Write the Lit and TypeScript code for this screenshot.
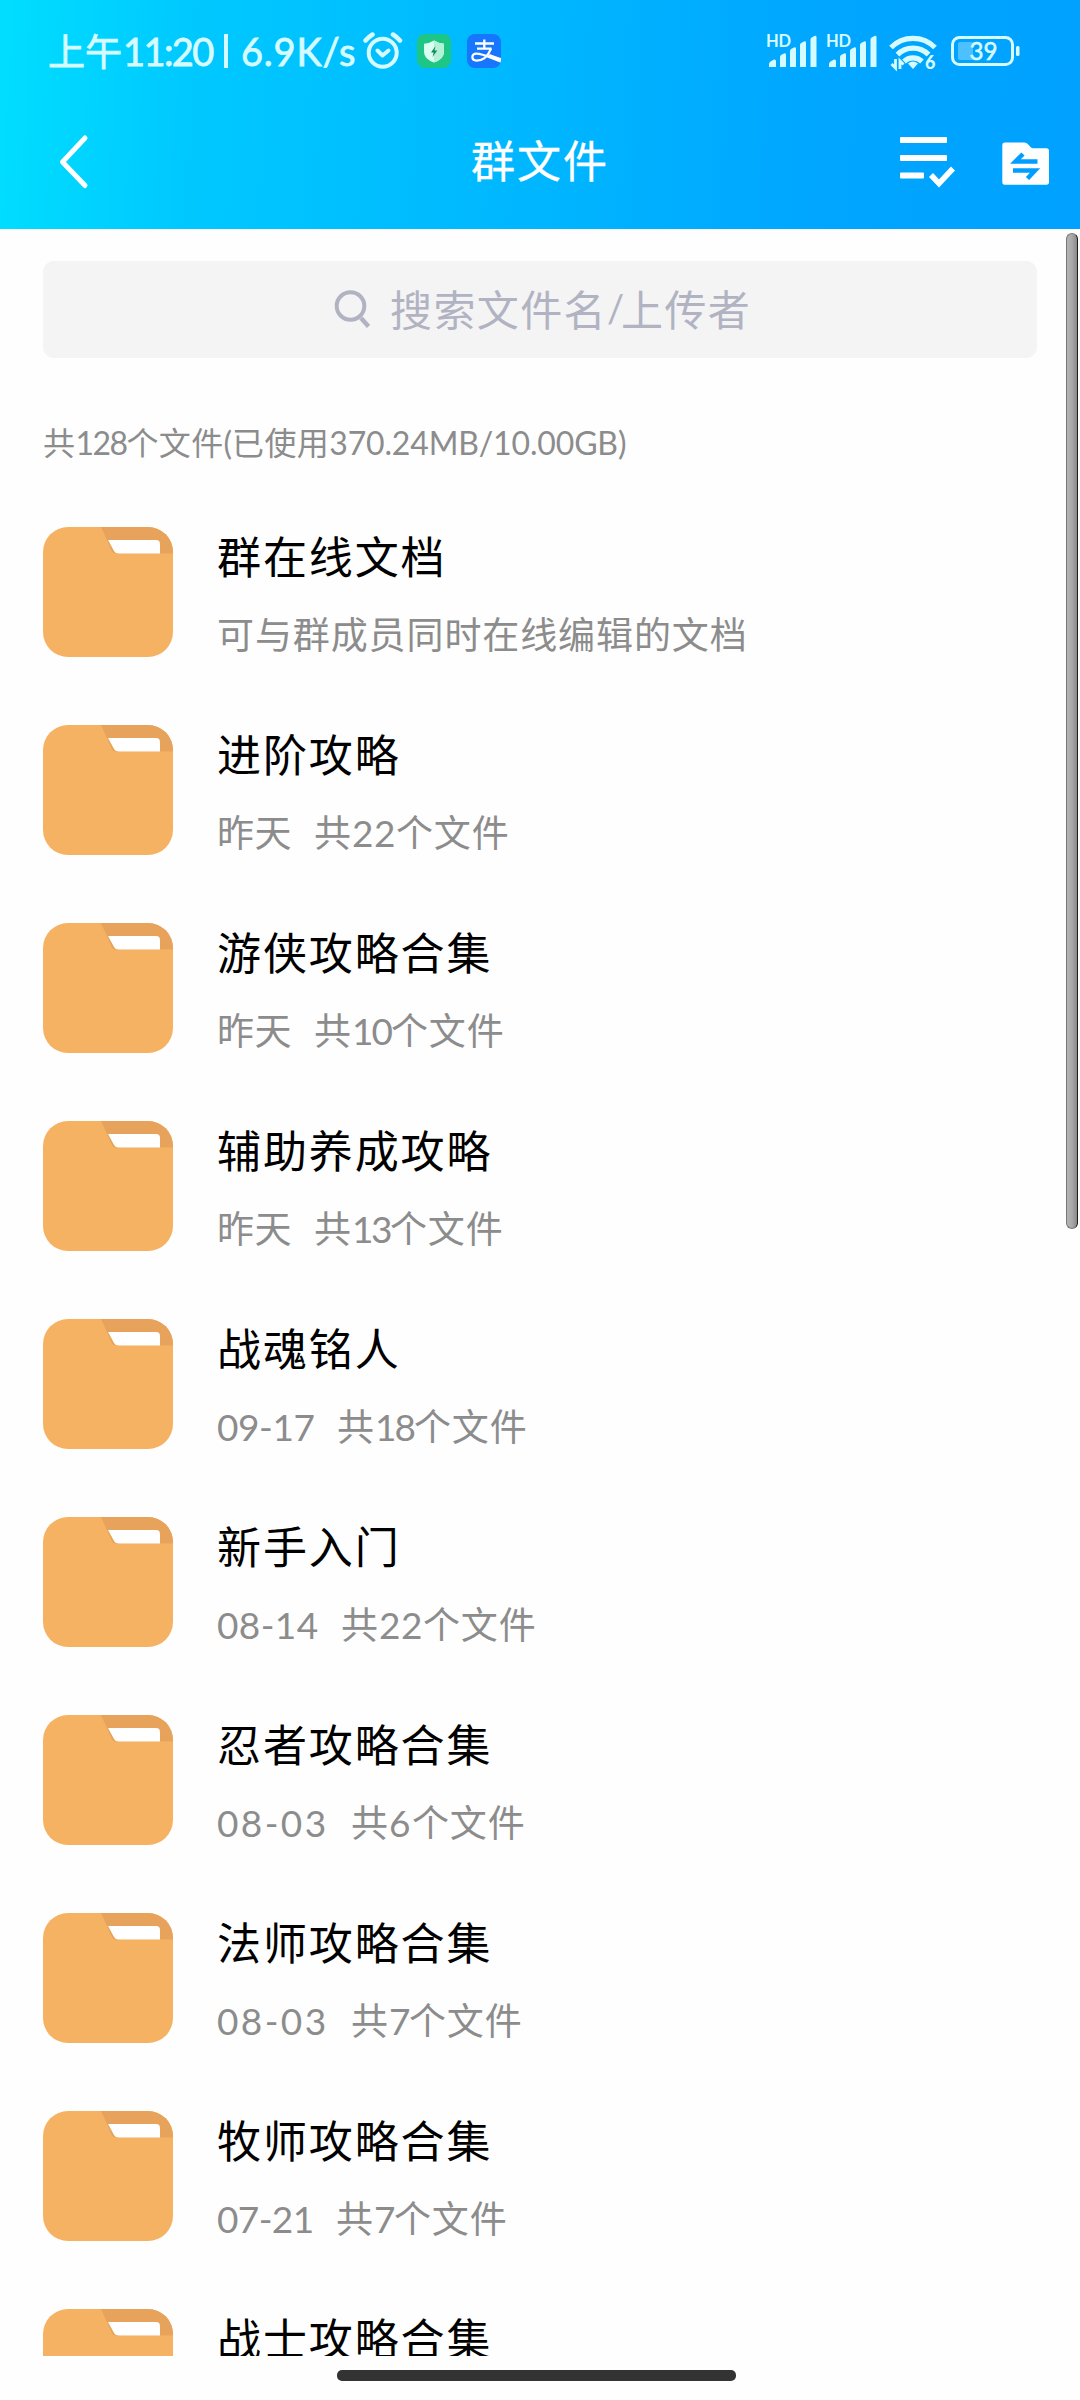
import { LitElement, html, css, svg, nothing } from "lit";
import { customElement, property } from "lit/decorators.js";
import { styleMap } from "lit/directives/style-map.js";

interface Entry {
  title: string;
  note?: string;
  date?: string;
  dateWidth?: number;
  count?: string;
  countWidth?: number;
}

const ENTRIES: Entry[] = [
  { title: "群在线文档", note: "可与群成员同时在线编辑的文档" },
  { title: "进阶攻略", date: "昨天", dateWidth: 97, count: "22", countWidth: 44 },
  { title: "游侠攻略合集", date: "昨天", dateWidth: 97, count: "10", countWidth: 39 },
  { title: "辅助养成攻略", date: "昨天", dateWidth: 97, count: "13", countWidth: 38 },
  { title: "战魂铭人", date: "09-17", dateWidth: 120, count: "18", countWidth: 39 },
  { title: "新手入门", date: "08-14", dateWidth: 124, count: "22", countWidth: 44 },
  { title: "忍者攻略合集", date: "08-03", dateWidth: 134, count: "6", countWidth: 23 },
  { title: "法师攻略合集", date: "08-03", dateWidth: 134, count: "7", countWidth: 20 },
  { title: "牧师攻略合集", date: "07-21", dateWidth: 119, count: "7", countWidth: 20 },
  { title: "战士攻略合集" },
];

const LATIN_ADVANCE = 21.46;

@customElement("status-bar")
class StatusBar extends LitElement {
  static styles = css`
    :host { display: flex; height: 103px; box-sizing: border-box; padding: 26px 60px 0 48px;
      align-items: flex-start; color: #d6fbff; font-family: "Noto Sans CJK SC", sans-serif; }
    .clock { display: flex; width: 315px; height: 50px; line-height: 50px; font-size: 37px; margin-top: -1px;
      white-space: pre; -webkit-text-stroke: 0.8px #d6fbff; }
    .cn { width: 75px; }
    .time { width: 90px; letter-spacing: -1.6px; }
    .bar { width: 4px; height: 34px; margin: 9px 13px 0 11px; background: #d6fbff; }
    .latin { font-family: Lato, sans-serif; font-size: 38px; line-height: 52px; }
    .speed { letter-spacing: 0.8px; }
    svg { display: block; }
    .alarm { margin-top: 6px; }
    .guard { margin: 8px 0 0 14px; }
    .pay { margin: 8px 0 0 16px; width: 34px; height: 34px; border-radius: 8px; background: #1676fe;
      overflow: hidden; }
    .grow { flex: 1; }
    .signals { margin-top: 4px; }
    text { font-family: Lato, sans-serif; fill: #d6fbff; }
    .level { stroke: #d6fbff; stroke-width: 0.6px; }
  `;

  private signal(x: number) {
    return svg`<g transform="translate(${x} 0)">
      <text x="-1" y="17" font-size="16.5" font-weight="700" textLength="25">HD</text>
      <path fill="#d6fbff" d="M2 37v-3q0-1.500 1.500-2.500l3-1.800q2.500-.8 2.500 1.500v5.800z
        M13 37V27q0-1.500 1.500-2.300l2.500-1.300q2-.6 2 1.300V37z
        M23 37V21q0-1.500 1.500-2.300l2.500-1.300q2-.6 2 1.300V37z
        M33 37V15q0-1.500 1.500-2.300l2.500-1.300q2-.6 2 1.300V37z
        M43.500 37V9.500q0-1.500 1.500-2.300l2.500-1.300q2-.6 2 1.300V37z"/></g>`;
  }

  render() {
    return html`
      <div class="clock"><span class="cn">上午</span><span class="time latin">11:20</span><i class="bar"></i><span class="speed latin">6.9K/s</span></div>
      <svg class="alarm" width="40" height="38" viewBox="0 0 40 38" fill="none" stroke="#d6fbff" stroke-width="4" stroke-linecap="round" stroke-linejoin="round">
        <circle cx="19.700" cy="20.800" r="14"/><path d="M14.500 18.500l5 5 6-5"/>
        <path d="M2.500 8.500q3-3.500 7-6M37 8.500q-3-3.500-7-6" stroke-width="4.500"/>
      </svg>
      <svg class="guard" width="34" height="34" viewBox="0 0 34 34">
        <rect width="34" height="34" rx="8" fill="#1dc684"/>
        <path d="M17 6.500q5 3 10 3.300V18q0 7-10 10.500Q7 25 7 18V9.800q5-.3 10-3.300z" fill="#d9fff0"/>
        <path d="M17 6.500q5 3 10 3.300V18q0 7-10 10.500z" fill="#b3f2d6"/>
        <path d="M18.500 12l-4.500 6.500h2.700l-1.200 4.500 4.800-6.500h-2.800z" fill="#158a5e"/>
      </svg>
      <svg class="pay" viewBox="0 0 34 34" fill="none" stroke="#fff" stroke-width="2.300">
        <path d="M8 9.500h19M17.300 5.500v9M10 14.600h14.500"/>
        <path d="M24 14.600c-3 7.500-8.500 12-14.500 12-5.500 0-5.500-7 0-7 6 0 13 3.700 25 8" stroke-width="2.300"/>
        <path d="M22 21.500q6 2.500 13 4.300" stroke-width="3"/>
      </svg>
      <span class="grow"></span>
      <svg class="signals" width="254" height="44" viewBox="0 0 254 44">
        ${this.signal(1)}${this.signal(61)}
        <g fill="none" stroke="#d6fbff" stroke-width="5.200">
          <path d="M125 17.500a31 31 0 0 1 44 0"/>
          <path d="M131.500 24.600a22 22 0 0 1 31 0"/>
          <path d="M138 31.500a13 13 0 0 1 18 0"/>
        </g>
        <path d="M142 33.500q5-4 10 0l-5 5.500z" fill="#d6fbff"/>
        <path d="M129.500 29v9l-4-4M134 39v-8l3.500 3.500" fill="none" stroke="#d6fbff" stroke-width="2.800"/>
        <text x="159" y="39" font-size="18" font-weight="900">6</text>
        <rect x="186.500" y="7.500" width="60" height="27" rx="7" fill="none" stroke="#d6fbff" stroke-width="3"/>
        <rect x="192" y="12" width="15" height="18" rx="2" fill="#4dc1ff"/>
        <text class="level" x="203.500" y="30" font-size="25" textLength="28" lengthAdjust="spacingAndGlyphs">39</text>
        <rect x="250" y="16" width="3.500" height="10" rx="1.500" fill="#d6fbff"/>
      </svg>`;
  }
}

@customElement("title-bar")
class TitleBar extends LitElement {
  static styles = css`
    :host { display: grid; grid-template-columns: 240px 1fr 240px; height: 126px;
      color: #fff; font-family: "Noto Sans CJK SC", sans-serif; }
    .back { padding: 30px 0 0 57px; }
    .title { text-align: center; font-size: 44px; letter-spacing: 2px; line-height: 60px; padding-top: 26px;
      -webkit-text-stroke: 0.3px #fff; }
    .actions { display: flex; gap: 44px; padding: 29px 0 0 57px; }
    svg { display: block; }
  `;
  render() {
    return html`
      <div class="back"><svg width="36" height="58" viewBox="0 0 36 58" fill="none" stroke="#fff" stroke-width="5" stroke-linecap="round" stroke-linejoin="round"><path d="M28 5L5.500 29 28 52.500"/></svg></div>
      <div class="title">群文件</div>
      <div class="actions">
        <svg width="60" height="60" viewBox="0 0 60 60" fill="#fff">
          <rect x="3" y="5" width="47" height="6" rx="1"/><rect x="3" y="23" width="47" height="6" rx="1"/>
          <rect x="3" y="40.500" width="24" height="6" rx="1"/>
          <path d="M34 43l8 8.500 14-15" fill="none" stroke="#fff" stroke-width="5.500"/>
        </svg>
        <svg width="50" height="60" viewBox="0 0 50 60">
          <path d="M3.500 10.500h20q2 0 3.500 1.800l3 3.200q.8.800 2 .8h13.500q2.500 0 2.500 2.500V50q0 2.700-2.500 2.700H3.500Q1.300 52.700 1.300 50V13q0-2.500 2.200-2.500z" fill="#fff"/>
          <path d="M36.500 29.500H14.500L22 22M12 38.500H34L26.500 46.500" fill="none" stroke="#009fff" stroke-width="4.500"/>
        </svg>
      </div>`;
  }
}

@customElement("file-row")
class FileRow extends LitElement {
  @property({ attribute: false }) entry!: Entry;

  static styles = css`
    :host { display: flex; height: 198px; box-sizing: border-box; gap: 44px; padding-left: 43px; flex: none;
      font-family: "Noto Sans CJK SC", sans-serif; }
    .icon { display: block; flex: none; border-radius: 25px; }
    .name { font-size: 44px; letter-spacing: 1.9px; line-height: 60px; color: #000; margin-top: -2px; white-space: nowrap; }
    .meta { display: flex; font-size: 37px; letter-spacing: 0.9px; line-height: 50px; color: #8c8c8c; margin-top: 23px; white-space: nowrap; }
    .date, .num { flex: none; }
    .latin { font-family: Lato, sans-serif; line-height: 53px; }
  `;

  private renderMeta() {
    const e = this.entry;
    if (e.note) return html`<div class="meta">${e.note}</div>`;
    if (!e.date) return nothing;
    const numeric = /\d/.test(e.date);
    const spacing = e.countWidth! / e.count!.length - LATIN_ADVANCE;
    return html`<div class="meta"><span class="date ${numeric ? "latin" : ""}" style=${styleMap({
        width: `${e.dateWidth}px`,
        letterSpacing: numeric ? `${(e.dateWidth! - 122) / 5}px` : "0.5px",
      })}>${e.date}</span><span>共</span><span class="num latin" style=${styleMap({
        width: `${e.countWidth}px`,
        letterSpacing: `${spacing}px`,
      })}>${e.count}</span><span>个文件</span></div>`;
  }

  render() {
    return html`
      <svg class="icon" width="130" height="130" viewBox="0 0 130 130">
        <rect width="130" height="130" fill="#f6b263"/>
        <path d="M58 0H130V26.500H72Q69 26 67.500 21z" fill="#e7a35b"/>
        <path d="M65 13H113q4 0 4 4v9.500H76q-4 0-5.500-3.500z" fill="#fff"/>
      </svg>
      <div><div class="name">${this.entry.title}</div>${this.renderMeta()}</div>`;
  }
}

@customElement("app-root")
class AppRoot extends LitElement {
  static styles = css`
    :host { display: flex; flex-direction: column; position: relative; width: 1080px; height: 2400px;
      overflow: hidden; background: #fefefe; font-family: "Noto Sans CJK SC", sans-serif; }
    .header { height: 229px; flex: none;
      background: linear-gradient(93deg, #00deff 0%, #00c9ff 17%, #00b6ff 50%, #00a6ff 76%, #00a1ff 100%); }
    .search { display: flex; flex: none; height: 97px; margin: 32px 43px 0 43px; border-radius: 11px; background: #f4f4f5;
      color: #b1b3c2; font-size: 42px; letter-spacing: 1.4px; line-height: 94px; }
    .search svg { margin: 28px 17px 0 290px; flex: none; }
    .slash { width: 14px; font-family: Lato, sans-serif; letter-spacing: 0; font-size: 38px; text-align: center; }
    .usage { display: flex; flex: none; height: 50px; line-height: 50px; margin: 58px 0 0 43px; font-size: 32px;
      letter-spacing: 0.4px; color: #8c8c8c; white-space: nowrap; }
    .latin { font-family: Lato, sans-serif; letter-spacing: -0.15px; line-height: 53px; }
    .total { width: 51px; letter-spacing: -1.5px; }
    .list { flex: none; display: flex; flex-direction: column; box-sizing: border-box; height: 1841px;
      margin-top: 49px; padding-top: 12px; overflow: hidden; }
    .thumb { position: absolute; left: 1066px; top: 233px; width: 12px; height: 996px; box-sizing: border-box;
      border: 1px solid #777; border-right: 1px solid #1c1c1c; border-radius: 6px;
      background: linear-gradient(90deg, #b4b4b4, #a8a8a8 50%, #898989); }
    .home { flex: none; width: 399px; height: 11px; margin: 14px 0 0 337px; border-radius: 5px; background: #333; }
  `;

  render() {
    return html`
      <div class="header"><status-bar></status-bar><title-bar></title-bar></div>
      <div class="search">
        <svg width="40" height="42" viewBox="0 0 40 42" fill="none" stroke="#b1b3c2" stroke-width="4">
          <circle cx="17.500" cy="17" r="13.800"/><path d="M28 29l7.500 8.500" stroke-width="4.500"/>
        </svg>
        <span>搜索文件名</span><span class="slash">/</span><span>上传者</span>
      </div>
      <div class="usage"><span>共</span><span class="latin total">128</span><span>个文件</span><span class="latin">(</span><span>已使用</span><span class="latin">370.24MB/10.00GB)</span></div>
      <div class="list">${ENTRIES.map((e) => html`<file-row .entry=${e}></file-row>`)}</div>
      <div class="home"></div>
      <div class="thumb"></div>`;
  }
}
